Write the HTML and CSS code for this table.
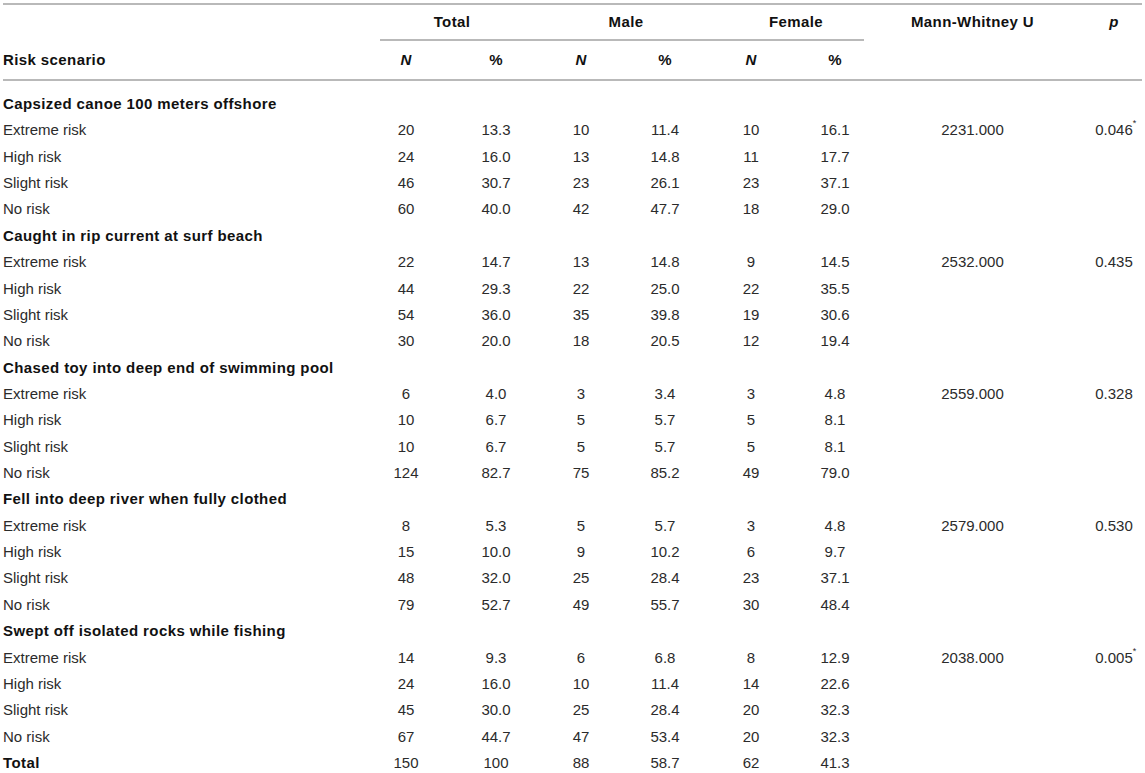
FILE: index.html
```html
<!DOCTYPE html>
<html lang="en">
<head>
<meta charset="utf-8">
<title>Risk scenarios by gender</title>
<link rel="stylesheet" href="styles.css">
</head>
<body>
<div class="table">
  <div class="head">
    <div class="row hrow1">
      <div class="c c1"></div>
      <div class="c grp b">Total</div>
      <div class="c grp b">Male</div>
      <div class="c grp b">Female</div>
      <div class="c mw b">Mann-Whitney U</div>
      <div class="c pp b"><i>p</i></div>
    </div>
    <div class="row hrow2">
      <div class="c c1 b">Risk scenario</div>
      <div class="c nt b"><i>N</i></div>
      <div class="c pt b">%</div>
      <div class="c nm b"><i>N</i></div>
      <div class="c pm b">%</div>
      <div class="c nf b"><i>N</i></div>
      <div class="c pf b">%</div>
      <div class="c mw"></div>
      <div class="c pp"></div>
    </div>
  </div>
  <div class="body">
    <div class="row"><div class="c c1 b">Capsized canoe 100 meters offshore</div></div>
    <div class="row"><div class="c c1">Extreme risk</div><div class="c nt">20</div><div class="c pt">13.3</div><div class="c nm">10</div><div class="c pm">11.4</div><div class="c nf">10</div><div class="c pf">16.1</div><div class="c mw">2231.000</div><div class="c pp">0.046<span class="star">*</span></div></div>
    <div class="row"><div class="c c1">High risk</div><div class="c nt">24</div><div class="c pt">16.0</div><div class="c nm">13</div><div class="c pm">14.8</div><div class="c nf">11</div><div class="c pf">17.7</div></div>
    <div class="row"><div class="c c1">Slight risk</div><div class="c nt">46</div><div class="c pt">30.7</div><div class="c nm">23</div><div class="c pm">26.1</div><div class="c nf">23</div><div class="c pf">37.1</div></div>
    <div class="row"><div class="c c1">No risk</div><div class="c nt">60</div><div class="c pt">40.0</div><div class="c nm">42</div><div class="c pm">47.7</div><div class="c nf">18</div><div class="c pf">29.0</div></div>

    <div class="row"><div class="c c1 b">Caught in rip current at surf beach</div></div>
    <div class="row"><div class="c c1">Extreme risk</div><div class="c nt">22</div><div class="c pt">14.7</div><div class="c nm">13</div><div class="c pm">14.8</div><div class="c nf">9</div><div class="c pf">14.5</div><div class="c mw">2532.000</div><div class="c pp">0.435</div></div>
    <div class="row"><div class="c c1">High risk</div><div class="c nt">44</div><div class="c pt">29.3</div><div class="c nm">22</div><div class="c pm">25.0</div><div class="c nf">22</div><div class="c pf">35.5</div></div>
    <div class="row"><div class="c c1">Slight risk</div><div class="c nt">54</div><div class="c pt">36.0</div><div class="c nm">35</div><div class="c pm">39.8</div><div class="c nf">19</div><div class="c pf">30.6</div></div>
    <div class="row"><div class="c c1">No risk</div><div class="c nt">30</div><div class="c pt">20.0</div><div class="c nm">18</div><div class="c pm">20.5</div><div class="c nf">12</div><div class="c pf">19.4</div></div>

    <div class="row"><div class="c c1 b">Chased toy into deep end of swimming pool</div></div>
    <div class="row"><div class="c c1">Extreme risk</div><div class="c nt">6</div><div class="c pt">4.0</div><div class="c nm">3</div><div class="c pm">3.4</div><div class="c nf">3</div><div class="c pf">4.8</div><div class="c mw">2559.000</div><div class="c pp">0.328</div></div>
    <div class="row"><div class="c c1">High risk</div><div class="c nt">10</div><div class="c pt">6.7</div><div class="c nm">5</div><div class="c pm">5.7</div><div class="c nf">5</div><div class="c pf">8.1</div></div>
    <div class="row"><div class="c c1">Slight risk</div><div class="c nt">10</div><div class="c pt">6.7</div><div class="c nm">5</div><div class="c pm">5.7</div><div class="c nf">5</div><div class="c pf">8.1</div></div>
    <div class="row"><div class="c c1">No risk</div><div class="c nt">124</div><div class="c pt">82.7</div><div class="c nm">75</div><div class="c pm">85.2</div><div class="c nf">49</div><div class="c pf">79.0</div></div>

    <div class="row"><div class="c c1 b">Fell into deep river when fully clothed</div></div>
    <div class="row"><div class="c c1">Extreme risk</div><div class="c nt">8</div><div class="c pt">5.3</div><div class="c nm">5</div><div class="c pm">5.7</div><div class="c nf">3</div><div class="c pf">4.8</div><div class="c mw">2579.000</div><div class="c pp">0.530</div></div>
    <div class="row"><div class="c c1">High risk</div><div class="c nt">15</div><div class="c pt">10.0</div><div class="c nm">9</div><div class="c pm">10.2</div><div class="c nf">6</div><div class="c pf">9.7</div></div>
    <div class="row"><div class="c c1">Slight risk</div><div class="c nt">48</div><div class="c pt">32.0</div><div class="c nm">25</div><div class="c pm">28.4</div><div class="c nf">23</div><div class="c pf">37.1</div></div>
    <div class="row"><div class="c c1">No risk</div><div class="c nt">79</div><div class="c pt">52.7</div><div class="c nm">49</div><div class="c pm">55.7</div><div class="c nf">30</div><div class="c pf">48.4</div></div>

    <div class="row"><div class="c c1 b">Swept off isolated rocks while fishing</div></div>
    <div class="row"><div class="c c1">Extreme risk</div><div class="c nt">14</div><div class="c pt">9.3</div><div class="c nm">6</div><div class="c pm">6.8</div><div class="c nf">8</div><div class="c pf">12.9</div><div class="c mw">2038.000</div><div class="c pp">0.005<span class="star">*</span></div></div>
    <div class="row"><div class="c c1">High risk</div><div class="c nt">24</div><div class="c pt">16.0</div><div class="c nm">10</div><div class="c pm">11.4</div><div class="c nf">14</div><div class="c pf">22.6</div></div>
    <div class="row"><div class="c c1">Slight risk</div><div class="c nt">45</div><div class="c pt">30.0</div><div class="c nm">25</div><div class="c pm">28.4</div><div class="c nf">20</div><div class="c pf">32.3</div></div>
    <div class="row"><div class="c c1">No risk</div><div class="c nt">67</div><div class="c pt">44.7</div><div class="c nm">47</div><div class="c pm">53.4</div><div class="c nf">20</div><div class="c pf">32.3</div></div>

    <div class="row"><div class="c c1 b">Total</div><div class="c nt">150</div><div class="c pt">100</div><div class="c nm">88</div><div class="c pm">58.7</div><div class="c nf">62</div><div class="c pf">41.3</div></div>
  </div>
</div>
</body>
</html>
```
FILE: styles.css
```css
* { box-sizing: border-box; }

html, body {
  margin: 0;
  padding: 0;
  background: #ffffff;
}

body {
  font-family: "Liberation Sans", Arial, Helvetica, sans-serif;
  font-size: 15px;
  color: #2b2b2b;
}

.table {
  margin: 3px 3px 0 3px;
  width: 1139px;
  border-top: 2px solid #b9b9b9;
}

.row {
  display: grid;
  grid-template-columns: 377px 70px 74px 99px 105px 65px 71px 222px 56px;
  height: 26.36px;
  line-height: 26.36px;
  white-space: nowrap;
}

.c {
  text-align: center;
}

.c1 {
  text-align: left;
}

.b {
  font-weight: bold;
  color: #111111;
  letter-spacing: 0.4px;
}

.b i { font-style: italic; }

/* column centring offsets */
.nt { padding-right: 18px; }
.pt { padding-left: 18px; }
.nm { padding-left: 15px; }
.pm { padding-right: 21px; }
.nf { padding-right: 19px; }
.pf { padding-left: 13px; }
.mw { padding-right: 5px; grid-column: 8; }
.pp { grid-column: 9; }

.head {
  border-bottom: 2px solid #b9b9b9;
}

.hrow1 {
  height: 36px;
  line-height: 34px;
}

.hrow1 .c {
  border-bottom: 2px solid transparent;
}

.hrow1 .grp {
  grid-column: span 2;
  border-bottom-color: #b9b9b9;
}

.hrow1 .mw { grid-column: 8; }

.hrow2 {
  height: 38px;
  line-height: 38px;
}

.body {
  padding-top: 10px;
}

.star {
  display: inline-block;
  width: 0;
  font-size: 9px;
  line-height: 9px;
  vertical-align: 9px;
  overflow: visible;
}
```
